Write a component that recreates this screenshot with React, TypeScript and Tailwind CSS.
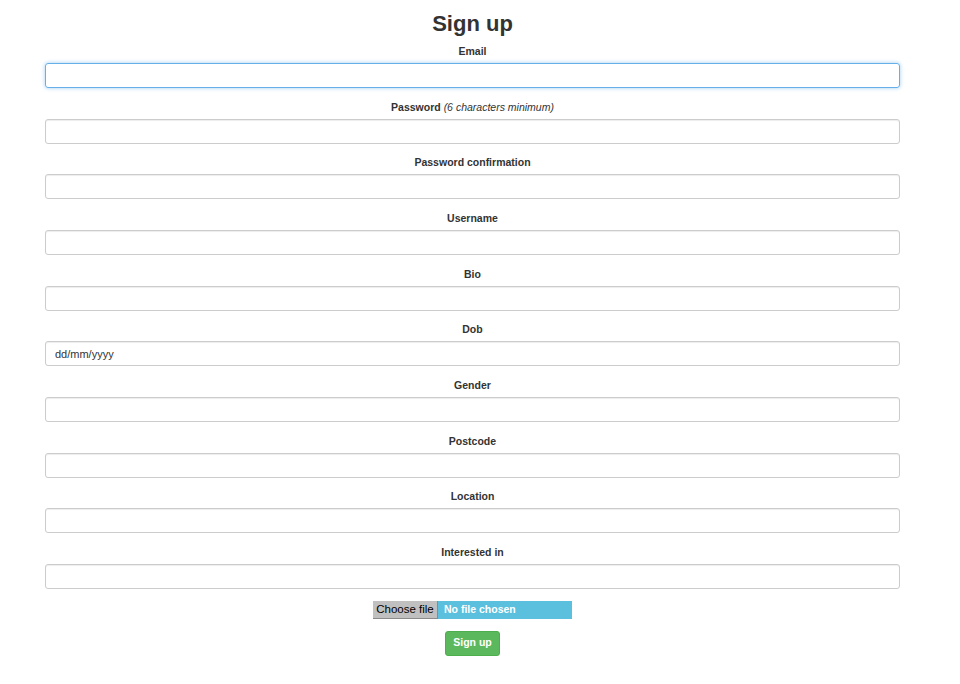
const fields = [
  { label: 'Email', focus: true },
  { label: 'Password', hint: '(6 characters minimum)' },
  { label: 'Password confirmation' },
  { label: 'Username' },
  { label: 'Bio' },
  { label: 'Dob', placeholder: 'dd/mm/yyyy' },
  { label: 'Gender' },
  { label: 'Postcode' },
  { label: 'Location' },
  { label: 'Interested in' },
];

export default function App() {
  return (
    <div
      className="min-h-[684px] w-[960px] bg-white text-[#333]"
      style={{ fontFamily: '"Liberation Sans", Arial, sans-serif' }}
    >
      <div className="ml-[45px] w-[855px] pt-[11px]">
        <h1 className="mb-[7px] text-center text-[22px] font-bold leading-[26px]">Sign up</h1>

        {fields.map((f) => (
          <div key={f.label} className="mb-[11.67px] flex flex-col">
            <label className="mb-[5px] text-center text-[10.5px] font-bold leading-[14px]">
              {f.label}
              {f.hint && <em className="font-normal"> {f.hint}</em>}
            </label>
            <div
              className={
                'flex h-[25px] items-center rounded-[3px] border px-[9px] text-[11px] ' +
                (f.focus
                  ? 'border-[#66afe9] shadow-[0_0_4px_rgba(102,175,233,0.6)]'
                  : 'border-[#cccccc] shadow-[inset_0_1px_1px_rgba(0,0,0,0.075)]')
              }
            >
              {f.placeholder && <span className="text-[#333]">{f.placeholder}</span>}
            </div>
          </div>
        ))}

        <div className="flex justify-center">
          <div className="flex h-[18px] w-[199px] items-stretch leading-[17px]">
            <span className="flex w-[65px] items-center justify-center border-b border-r border-[#8a8a8a] bg-[#c0c0c0] text-[11.5px] text-black">
              Choose file
            </span>
            <span className="flex flex-1 items-center bg-[#5bc0de] pl-[6px] text-[10.5px] font-bold text-white">
              No file chosen
            </span>
          </div>
        </div>

        <div className="mt-[12px] flex justify-center">
          <button className="h-[25px] w-[55px] rounded-[3px] border border-[#4cae4c] bg-[#5cb85c] text-[10.5px] font-bold text-white">
            Sign up
          </button>
        </div>
      </div>
    </div>
  );
}
